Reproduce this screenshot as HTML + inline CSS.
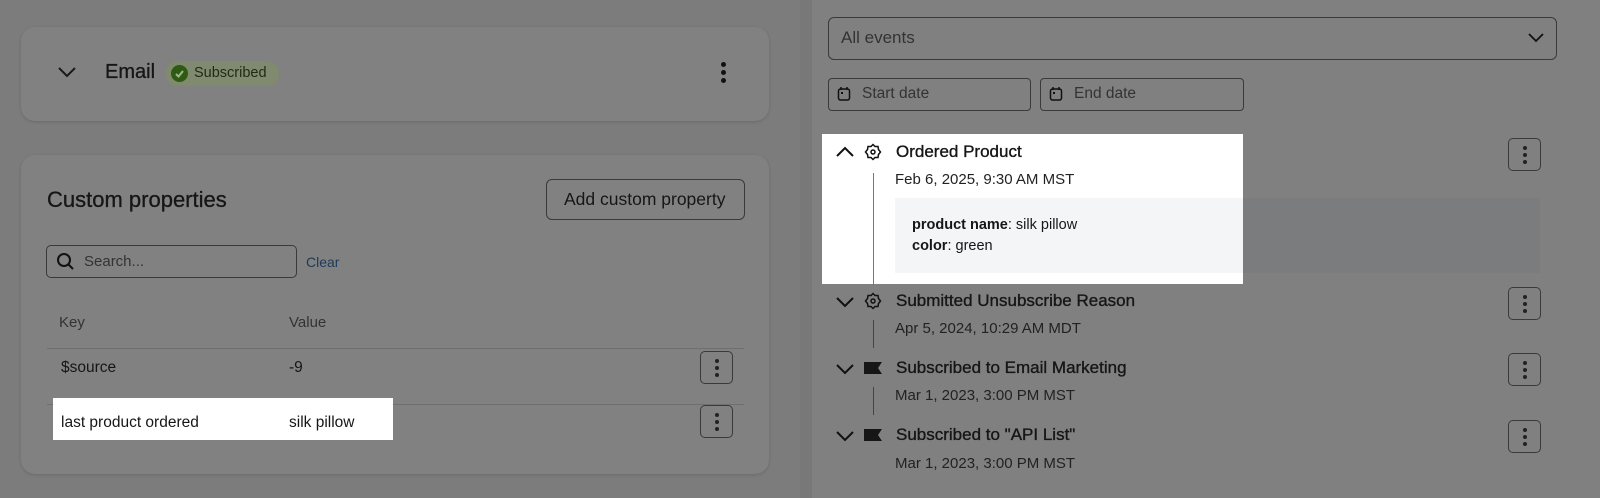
<!DOCTYPE html>
<html><head><style>
*{box-sizing:border-box;margin:0;padding:0}
body{width:1600px;height:498px;overflow:hidden;background:#7c7c7c;font-family:"Liberation Sans",sans-serif;color:#161616;position:relative}
.a{position:absolute}
.card{position:absolute;left:21px;width:748px;background:#818181;border-radius:14px;box-shadow:0 1px 3px rgba(0,0,0,.15)}
.kb{position:absolute;width:33px;height:33px;border:1.3px solid #3a3a3a;border-radius:5px}
.kb i{position:absolute;left:14px;width:4px;height:4px;border-radius:50%;background:#222}
.t{font-size:17px;white-space:nowrap;-webkit-text-stroke:0.35px #161616}
.d{font-size:15px;color:#222;white-space:nowrap}
</style></head><body>
<div class="a" style="left:800px;top:0;width:12px;height:498px;background:#787878"></div>
<div class="a" style="left:812px;top:0;width:788px;height:498px;background:#808080"></div>

<!-- Email card -->
<div class="card" style="top:27px;height:94px"></div>
<svg class="a" style="left:57px;top:66px" width="20" height="12"><path d="M2 2 L10 10 L18 2" fill="none" stroke="#1a1a1a" stroke-width="2"/></svg>
<div class="a" style="left:105px;top:61px;font-size:20px;-webkit-text-stroke:0.3px #161616">Email</div>
<div class="a" style="left:165px;top:61px;width:114px;height:25px;border-radius:13px;background:#7f8a6f"></div>
<div class="a" style="left:171px;top:65px;width:17px;height:17px;border-radius:50%;background:#2f5a14"></div>
<svg class="a" style="left:171px;top:65px" width="17" height="17"><path d="M5 9 L7.5 11.5 L12 6" fill="none" stroke="#9ab88a" stroke-width="2"/></svg>
<div class="a" style="left:194px;top:65px;font-size:14.5px;color:#1e2a14">Subscribed</div>
<div class="a" style="left:721px;top:62px;width:5px;height:5px;border-radius:50%;background:#111"></div>
<div class="a" style="left:721px;top:70px;width:5px;height:5px;border-radius:50%;background:#111"></div>
<div class="a" style="left:721px;top:78px;width:5px;height:5px;border-radius:50%;background:#111"></div>

<!-- Custom properties card -->
<div class="card" style="top:155px;height:319px"></div>
<div class="a" style="left:47px;top:187px;font-size:22px;-webkit-text-stroke:0.3px #161616">Custom properties</div>
<div class="a" style="left:546px;top:179px;width:199px;height:41px;border:1.3px solid #3a3a3a;border-radius:6px"></div>
<div class="a" style="left:564px;top:189px;font-size:17.5px;white-space:nowrap">Add custom property</div>
<div class="a" style="left:46px;top:245px;width:251px;height:33px;border:1.3px solid #3a3a3a;border-radius:5px"></div>
<svg class="a" style="left:56px;top:252px" width="20" height="20"><circle cx="8" cy="8" r="6" fill="none" stroke="#111" stroke-width="2"/><path d="M12.5 12.5 L17 17" stroke="#111" stroke-width="2"/></svg>
<div class="a" style="left:84px;top:253px;font-size:15px;color:#333">Search...</div>
<div class="a" style="left:306px;top:254px;font-size:14px;color:#1d3a5c">Clear</div>
<div class="a" style="left:59px;top:314px;font-size:15px;color:#333">Key</div>
<div class="a" style="left:289px;top:314px;font-size:15px;color:#333">Value</div>
<div class="a" style="left:47px;top:348px;width:697px;height:1px;background:#6f6f6f"></div>
<div class="a" style="left:61px;top:359px;font-size:15.5px">$source</div>
<div class="a" style="left:289px;top:359px;font-size:15.5px">-9</div>
<div class="kb" style="left:700px;top:351px"><i style="top:7px"></i><i style="top:14px"></i><i style="top:21px"></i></div>
<div class="a" style="left:47px;top:404px;width:697px;height:1px;background:#6f6f6f"></div>
<div class="a" style="left:53px;top:398px;width:340px;height:42px;background:#fff"></div>
<div class="a" style="left:61px;top:414px;font-size:15.5px;white-space:nowrap">last product ordered</div>
<div class="a" style="left:289px;top:414px;font-size:15.5px">silk pillow</div>
<div class="kb" style="left:700px;top:405px"><i style="top:7px"></i><i style="top:14px"></i><i style="top:21px"></i></div>

<!-- Right -->
<div class="a" style="left:828px;top:17px;width:729px;height:43px;border:1.3px solid #3a3a3a;border-radius:6px"></div>
<div class="a" style="left:841px;top:28px;font-size:17px;color:#333">All events</div>
<svg class="a" style="left:1528px;top:33px" width="16" height="10"><path d="M1 1 L8 8 L15 1" fill="none" stroke="#111" stroke-width="1.8"/></svg>
<div class="a" style="left:828px;top:78px;width:203px;height:33px;border:1.3px solid #3a3a3a;border-radius:4px"></div>
<div class="a" style="left:1040px;top:78px;width:204px;height:33px;border:1.3px solid #3a3a3a;border-radius:4px"></div>
<svg class="a" style="left:837px;top:86px" width="14" height="16"><rect x="1.5" y="3" width="11" height="11" rx="2" fill="none" stroke="#111" stroke-width="1.5"/><path d="M4 1v3M10 1v3" stroke="#111" stroke-width="1.5"/><rect x="4" y="6" width="2" height="2" fill="#111"/></svg>
<svg class="a" style="left:1049px;top:86px" width="14" height="16"><rect x="1.5" y="3" width="11" height="11" rx="2" fill="none" stroke="#111" stroke-width="1.5"/><path d="M4 1v3M10 1v3" stroke="#111" stroke-width="1.5"/><rect x="4" y="6" width="2" height="2" fill="#111"/></svg>
<div class="a" style="left:862px;top:85px;font-size:15.5px;color:#333">Start date</div>
<div class="a" style="left:1074px;top:85px;font-size:15.5px;color:#333">End date</div>

<div class="a" style="left:895px;top:198px;width:645px;height:75px;background:#7b7c7e"></div>
<div class="a" style="left:822px;top:134px;width:421px;height:150px;background:#fff"></div>
<div class="a" style="left:895px;top:198px;width:348px;height:75px;background:#f4f5f7"></div>
<div class="a" style="left:873px;top:173px;width:1px;height:113px;background:#777"></div>
<div class="a" style="left:873px;top:320px;width:1px;height:28px;background:#444"></div>
<div class="a" style="left:873px;top:387px;width:1px;height:28px;background:#444"></div>

<svg class="a" style="left:835px;top:146px" width="20" height="12"><path d="M2 10 L10 2 L18 10" fill="none" stroke="#111" stroke-width="2"/></svg>
<svg class="a" style="left:835px;top:296px" width="20" height="12"><path d="M2 2 L10 10 L18 2" fill="none" stroke="#111" stroke-width="2"/></svg>
<svg class="a" style="left:835px;top:363px" width="20" height="12"><path d="M2 2 L10 10 L18 2" fill="none" stroke="#111" stroke-width="2"/></svg>
<svg class="a" style="left:835px;top:430px" width="20" height="12"><path d="M2 2 L10 10 L18 2" fill="none" stroke="#111" stroke-width="2"/></svg>
<svg class="a" style="left:864px;top:143px" width="18" height="18"><path d="M9 1.5 L11 3.5 L14 3.5 L14.5 6.5 L16.5 9 L14.5 11.5 L14 14.5 L11 14.5 L9 16.5 L7 14.5 L4 14.5 L3.5 11.5 L1.5 9 L3.5 6.5 L4 3.5 L7 3.5 Z" fill="none" stroke="#111" stroke-width="1.5"/><circle cx="9" cy="9" r="2" fill="none" stroke="#111" stroke-width="1.5"/></svg>
<svg class="a" style="left:864px;top:292px" width="18" height="18"><path d="M9 1.5 L11 3.5 L14 3.5 L14.5 6.5 L16.5 9 L14.5 11.5 L14 14.5 L11 14.5 L9 16.5 L7 14.5 L4 14.5 L3.5 11.5 L1.5 9 L3.5 6.5 L4 3.5 L7 3.5 Z" fill="none" stroke="#111" stroke-width="1.5"/><circle cx="9" cy="9" r="2" fill="none" stroke="#111" stroke-width="1.5"/></svg>
<svg class="a" style="left:863px;top:361px" width="20" height="14"><path d="M1 1 H19 L15 7 L19 13 H1 Z" fill="#161616"/></svg>
<svg class="a" style="left:863px;top:428px" width="20" height="14"><path d="M1 1 H19 L15 7 L19 13 H1 Z" fill="#161616"/></svg>

<div class="a t" style="left:896px;top:142px">Ordered Product</div>
<div class="a d" style="left:895px;top:171px">Feb 6, 2025, 9:30 AM MST</div>
<div class="a" style="left:912px;top:217px;font-size:14.5px"><b>product name</b>: silk pillow</div>
<div class="a" style="left:912px;top:238px;font-size:14.5px"><b>color</b>: green</div>
<div class="a t" style="left:896px;top:291px">Submitted Unsubscribe Reason</div>
<div class="a d" style="left:895px;top:320px">Apr 5, 2024, 10:29 AM MDT</div>
<div class="a t" style="left:896px;top:358px">Subscribed to Email Marketing</div>
<div class="a d" style="left:895px;top:387px">Mar 1, 2023, 3:00 PM MST</div>
<div class="a t" style="left:896px;top:425px">Subscribed to "API List"</div>
<div class="a d" style="left:895px;top:455px">Mar 1, 2023, 3:00 PM MST</div>

<div class="kb" style="left:1508px;top:138px"><i style="top:7px"></i><i style="top:14px"></i><i style="top:21px"></i></div>
<div class="kb" style="left:1508px;top:287px"><i style="top:7px"></i><i style="top:14px"></i><i style="top:21px"></i></div>
<div class="kb" style="left:1508px;top:353px"><i style="top:7px"></i><i style="top:14px"></i><i style="top:21px"></i></div>
<div class="kb" style="left:1508px;top:420px"><i style="top:7px"></i><i style="top:14px"></i><i style="top:21px"></i></div>
</body></html>
